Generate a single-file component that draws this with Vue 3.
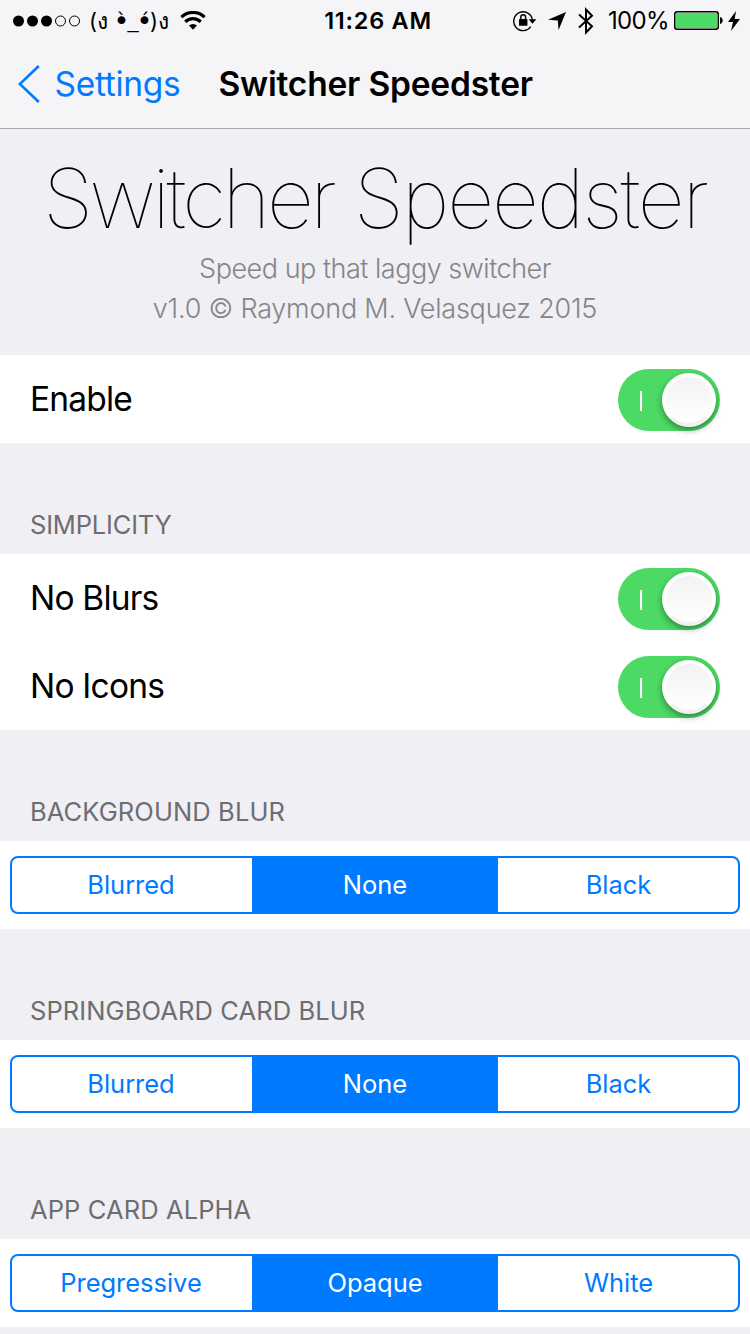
<script setup>
const groups = [
  { title: '', toggles: ['Enable'] },
  { title: 'SIMPLICITY', tight: true, toggles: ['No Blurs', 'No Icons'] },
  { title: 'BACKGROUND BLUR', options: ['Blurred', 'None', 'Black'] },
  { title: 'SPRINGBOARD CARD BLUR', options: ['Blurred', 'None', 'Black'] },
  { title: 'APP CARD ALPHA', options: ['Pregressive', 'Opaque', 'White'] },
]
</script>

<template>
  <div class="screen">
    <header class="top">
      <div class="status">
        <div class="left">
          <svg class="dots" width="68" height="12" viewBox="0 0 68 12">
            <circle cx="5.5" cy="6" r="5.5" /><circle cx="19.5" cy="6" r="5.5" /><circle cx="33.5" cy="6" r="5.5" />
            <circle class="ring" cx="47.5" cy="6" r="5" /><circle class="ring" cx="61.5" cy="6" r="5" />
          </svg>
          <div class="carrier">
            <span class="paren">(</span><span class="fist">ง</span>
            <span class="eye">•<i>ˋ</i></span><span class="mouth">_</span><span class="eye">•<i>ˊ</i></span>
            <span class="paren">)</span><span class="fist">ง</span>
          </div>
          <svg class="wifi" width="26" height="19" viewBox="0 0 26 19">
            <path d="M1.4 6.2A16.6 16.6 0 0 1 24.6 6.2M5.3 10.8A11 11 0 0 1 20.7 10.8" />
            <path class="solid" d="M9 14.6A6 6 0 0 1 17 14.6L13 18.8Z" />
          </svg>
        </div>
        <span class="clock">11:26 AM</span>
        <div class="right">
          <svg class="lock" width="24" height="22" viewBox="0 0 24 22">
            <path class="line" d="M17.8 16.7A9.4 9.4 0 1 1 19.4 9.6" />
            <path d="M15.6 9.2H23.4L19.4 13.8Z" />
            <rect x="6" y="9" width="8.4" height="6.8" rx=".5" />
            <path class="line" d="M7.8 9.3V7.2a2.4 2.4 0 0 1 4.8 0v2.1" />
          </svg>
          <svg class="arrow" width="18" height="18" viewBox="0 0 18 18"><path d="M18 0L10.6 18L9.8 8.6L0 7.8Z" /></svg>
          <svg class="bt" width="16" height="28" viewBox="0 0 16 28"><path d="M1 7.5L14 19.2L8 25.5V2.5L14 8.8L1 20.5" /></svg>
          <span class="pct">100%</span>
          <svg class="battery" width="49" height="19" viewBox="0 0 49 19">
            <rect class="shell" x=".75" y=".75" width="43.5" height="17.5" rx="2.5" />
            <rect class="charge" x="2" y="2" width="41" height="15" rx="1" />
            <path d="M46 6C49.6 6.6 49.6 12.4 46 13Z" />
          </svg>
          <svg class="bolt" width="12" height="20" viewBox="0 0 12 20"><path d="M8 0L0 11H5L3 20L12 8H6.7Z" /></svg>
        </div>
      </div>
      <nav class="nav">
        <div class="back">
          <svg width="22" height="38" viewBox="0 0 22 38"><path d="M20.8 1L1.8 19L20.8 37" /></svg>
          <span>Settings</span>
        </div>
        <h1>Switcher Speedster</h1>
      </nav>
    </header>

    <section class="hero">
      <h2><span class="first">Switcher</span> <span class="second">Speedster</span></h2>
      <p class="tagline">Speed up that laggy switcher</p>
      <p class="copyright">v1.0 © Raymond M. Velasquez 2015</p>
    </section>

    <section v-for="(group, i) in groups" :key="i" class="group">
      <h3 v-if="group.title" :class="{ tight: group.tight }">{{ group.title }}</h3>
      <div class="cells">
        <div v-for="label in group.toggles" :key="label" class="row">
          <span>{{ label }}</span>
          <div class="switch"><i class="mark"></i><i class="knob"></i></div>
        </div>
        <div v-if="group.options" class="row segmented-row">
          <div class="segmented">
            <div v-for="(option, n) in group.options" :key="option" class="segment" :class="{ selected: n === 1 }">{{ option }}</div>
          </div>
        </div>
      </div>
    </section>
  </div>
</template>

<style>
body { margin: 0; background: #efeff4; overflow: hidden; }
</style>

<style scoped>
* { box-sizing: border-box; }
.screen {
  width: 750px; height: 1334px; overflow: hidden; background: #efeff4; color: #000;
  font-family: Inter, Roboto, "Liberation Sans", "Noto Sans", sans-serif;
}
h1, h2, h3, p { margin: 0; font-weight: 400; }
svg { display: block; flex: none; }
span, h1, h2, p { white-space: nowrap; }
.top { height: 129px; background: #f5f5f7; border-bottom: 1px solid #a9a9ad; }
.status { height: 40px; display: grid; grid-template-columns: 300px 156px 294px; align-items: center; }
.left, .right { display: flex; align-items: center; height: 40px; }
.left { padding-left: 13px; }
.ring { fill: none; stroke: #000; stroke-width: 1; }
.carrier { width: 80px; margin-left: 8px; display: flex; font-size: 22px; line-height: 40px; }
.carrier span { flex: none; text-align: center; }
.paren { width: 7px; }
.fist { width: 12px; font-size: 23px; font-weight: 500; }
.fist + .eye { margin-left: 8px; }
.eye { position: relative; width: 11px; font-family: "DejaVu Sans", sans-serif; font-size: 27px; display: flex; justify-content: center; }
.eye i { position: absolute; left: 0; width: 11px; top: -1px; font-style: normal; font-size: 20px; display: flex; justify-content: center; }
.mouth { width: 12px; font-family: "Liberation Sans", sans-serif; font-size: 20px; }
.wifi { margin-left: 11px; fill: none; stroke: #000; stroke-width: 3.2; }
.wifi .solid { fill: #000; stroke: none; }
.clock { text-align: center; font-size: 23.5px; font-weight: 600; letter-spacing: .75px; line-height: 40px; padding-top: 1px; }
.right { padding-left: 57px; }
.line { fill: none; stroke: #000; stroke-width: 1.4; }
.arrow { margin-left: 11px; }
.bt { margin-left: 12px; fill: none; stroke: #000; stroke-width: 2; }
.pct { width: 60px; margin-left: 14px; font-size: 24px; letter-spacing: -.7px; line-height: 40px; padding-top: 1px; }
.battery { margin-left: 6px; }
.shell { fill: none; stroke: #000; stroke-width: 1.5; }
.charge { fill: #4cd964; }
.bolt { margin-left: 5px; }
.nav { height: 88px; display: grid; grid-template-columns: 218.5px 1fr; align-items: center; }
.back { display: flex; align-items: center; padding-left: 17.5px; color: #007aff; font-size: 33.5px; letter-spacing: -.3px; line-height: 40px; gap: 15px; }
.back path { fill: none; stroke: #007aff; stroke-width: 2.6; }
.nav h1 { font-size: 33.5px; font-weight: 600; letter-spacing: -.2px; line-height: 40px; }
.hero { height: 226px; text-align: center; padding-top: 20px; display: flex; flex-direction: column; align-items: center; }
.hero h2 { font-size: 82px; font-weight: 100; line-height: 100px; letter-spacing: -2.75px; }
.hero .first { letter-spacing: -3.55px; }
.hero .second { letter-spacing: -2.15px; }
.hero p { color: #858589; font-weight: 300; font-size: 27px; line-height: 40px; }
.tagline { letter-spacing: -.48px; }
.copyright { letter-spacing: -.22px; }
.group h3 { height: 111px; padding: 67px 0 0 30px; color: #6d6d72; font-size: 25.5px; line-height: 30px; letter-spacing: .1px; }
.group h3.tight { letter-spacing: -.18px; }
.cells { background: #fff; }
.row { height: 88px; padding: 0 30px; display: flex; align-items: center; justify-content: space-between; font-size: 33.5px; letter-spacing: -.8px; }
.switch { width: 102px; height: 62px; margin-top: 2px; border-radius: 31px; background: #4cd964; padding: 0 4px 0 22px; display: flex; align-items: center; justify-content: space-between; }
.mark { width: 2px; height: 20px; background: #fff; margin-top: 2px; }
.knob { width: 54px; height: 54px; border-radius: 50%; border: 4px solid #fff; border-bottom-color: #f1f1f1; background: linear-gradient(#f2f2f2, #fff); box-shadow: 0 3px 6px rgba(0, 0, 0, .4); }
.segmented-row { padding: 0 10px; }
.segmented { width: 730px; height: 58px; border: 2px solid #007aff; border-radius: 8px; display: grid; grid-template-columns: 240px 246px 240px; overflow: hidden; }
.segment { display: flex; align-items: center; justify-content: center; padding-bottom: 2px; padding-right: 2px; color: #007aff; font-size: 25.5px; letter-spacing: -.03px; }
.segment.selected { background: #007aff; color: #fff; padding-right: 0; }
.segment:last-child { padding-right: 0; padding-left: 1px; }
</style>
